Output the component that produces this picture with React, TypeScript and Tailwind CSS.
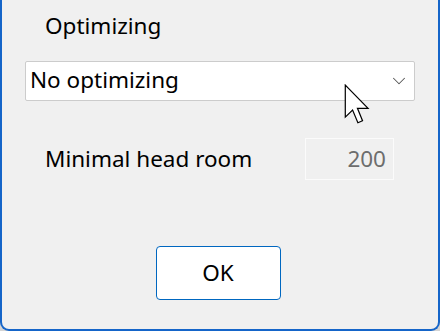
import { ChevronDown } from "lucide-react";

const font = { fontFamily: '"Noto Sans", "Open Sans", sans-serif' };

function Cursor() {
  return (
    <svg
      className="absolute left-[342px] top-[84px]"
      width="28"
      height="42"
      viewBox="0 0 12.5 19"
    >
      <path
        d="M0.5 0.5 L0.5 15 L3.8 11.8 L6.2 17.5 L8.3 16.6 L6 11 L10.8 11 Z"
        fill="#fff"
        stroke="#000"
        strokeWidth="0.55"
        strokeLinejoin="miter"
      />
    </svg>
  );
}

export default function App() {
  return (
    <div className="w-[440px] h-[331px] bg-[#d4d4d4]" style={font}>
      <div className="relative h-full flex flex-col bg-[#f0f0f0] border-x-2 border-b-2 border-[#1565c9] rounded-b-[9px] text-[#000]">
        {/* Optimizing */}
        <div className="pl-[43px] pt-[12px] text-[22.5px] leading-[28px]">Optimizing</div>
        <div className="mt-[21px] ml-[23px] w-[390px] h-[40px] bg-white border border-[#cccccc] rounded-[2px] flex items-center pl-[4px] pr-[4px]">
          <span className="flex-1 text-[22.5px] leading-none pb-[2px]">No optimizing</span>
          <ChevronDown size={22} strokeWidth={1.1} className="text-[#555]" />
        </div>

        {/* Head room */}
        <div className="mt-[37px] flex items-center">
          <span className="pl-[43px] flex-1 text-[22.5px] leading-none pt-[1px]">Minimal head room</span>
          <div className="mr-[44px] w-[89px] h-[42px] border border-[#fbfbfb] flex items-center justify-end pr-[7px] text-[22.5px] text-[#6d6d6d]">
            200
          </div>
        </div>

        {/* OK */}
        <div className="mt-[66px] flex justify-center pr-[4px]">
          <button className="w-[125px] h-[54px] bg-white border border-[#0067c0] rounded-[4px] text-[22.5px] leading-none">
            OK
          </button>
        </div>

        <Cursor />
      </div>
    </div>
  );
}
